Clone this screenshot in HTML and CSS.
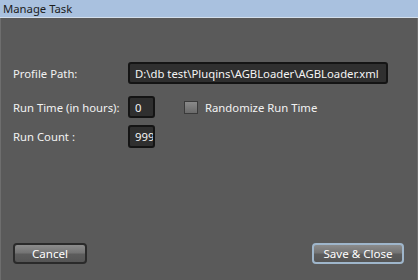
FILE: index.html
```html
<!DOCTYPE html>
<html>
<head>
<meta charset="utf-8">
<link rel="stylesheet" href="styles.css">
</head>
<body>
<div class="window">
  <div class="titlebar">Manage Task</div>
  <div class="content">
    <div class="form">
      <div class="label row1">Profile Path:</div>
      <div class="field row1"><div class="textbox wide">D:\db test\Pluqins\AGBLoader\AGBLoader.xml</div></div>
      <div class="label row2">Run Time (in hours):</div>
      <div class="field row2">
        <div class="textbox small">0</div>
        <label class="check"><span class="box"></span><span>Randomize Run Time</span></label>
      </div>
      <div class="label row3">Run Count :</div>
      <div class="field row3"><div class="textbox small">999</div></div>
    </div>
    <div class="footer">
      <button class="btn cancel">Cancel</button>
      <button class="btn save">Save &amp; Close</button>
    </div>
  </div>
</div>
</body>
</html>
```
FILE: styles.css
```css
html, body {
  margin: 0;
  padding: 0;
  background: #5a5a5a;
}
.window {
  width: 418px;
  height: 280px;
  display: flex;
  flex-direction: column;
  font-family: "Noto Sans", "Open Sans", sans-serif;
  font-size: 11.3px;
  color: #f2f2f2;
  box-sizing: border-box;
  border-left: 1px solid #6e6e6e;
  border-right: 1px solid #6e6e6e;
}
.titlebar {
  height: 17px;
  line-height: 17px;
  background: #a9c1df;
  color: #1c1c1c;
  padding-left: 3px;
  font-size: 11.3px;
  border-bottom: 1px solid #d4dfec;
  margin: 0 -1px;
}
.content {
  flex: 1;
  display: flex;
  flex-direction: column;
  padding: 44px 13px 16px 12px;
}
.form {
  display: grid;
  grid-template-columns: 115px 1fr;
  align-items: center;
}
.row1 { height: 22px; margin-bottom: 12px; }
.row2 { height: 22px; margin-bottom: 7px; }
.row3 { height: 23px; }
.label {
  display: flex;
  align-items: center;
}
.field {
  display: flex;
  align-items: center;
}
.textbox {
  box-sizing: border-box;
  height: 100%;
  border: 2px solid #141414;
  border-radius: 3px;
  background: #2f2f2f;
  color: #f4f4f4;
  padding-left: 5px;
  display: flex;
  align-items: center;
  white-space: nowrap;
  overflow: hidden;
}
.wide { width: 260px; }
.small { width: 27px; }
.check {
  display: flex;
  align-items: center;
  gap: 7px;
  margin-left: 29px;
}
.box {
  width: 14px;
  height: 13px;
  box-sizing: border-box;
  border: 1px solid #3a3a3a;
  background: linear-gradient(#8a8a8a, #6a6a6a);
}
.footer {
  margin-top: auto;
  display: flex;
  justify-content: space-between;
}
.btn {
  height: 21px;
  box-sizing: border-box;
  border-radius: 4px;
  font-family: inherit;
  font-size: 11.6px;
  color: #ffffff;
  padding: 0;
  background: linear-gradient(#8c8c8c 0%, #747474 45%, #5c5c5c 55%, #555555 100%);
}
.cancel {
  width: 74px;
  border: 2px solid #2a2a2a;
}
.save {
  width: 92px;
  border: 2px solid #9fb6cb;
}
```
